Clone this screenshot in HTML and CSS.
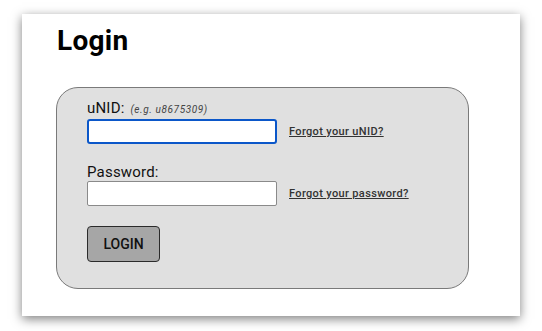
FILE: index.html
```html
<!DOCTYPE html>
<html>
<head>
<meta charset="utf-8">
<link rel="stylesheet" href="styles.css">
</head>
<body>
<div class="page">
  <h1 class="title">Login</h1>
  <form class="panel">
    <div class="field">
      <label class="label" for="unid">uNID: <span class="hint">(e.g. u8675309)</span></label>
      <div class="row">
        <input id="unid" class="input focused" type="text">
        <a class="link" href="#">Forgot your uNID?</a>
      </div>
    </div>
    <div class="field">
      <label class="label" for="pw">Password:</label>
      <div class="row">
        <input id="pw" class="input" type="password">
        <a class="link" href="#">Forgot your password?</a>
      </div>
    </div>
    <button class="btn" type="button">LOGIN</button>
  </form>
</div>
</body>
</html>
```

FILE: styles.css
```css
html, body {
  margin: 0;
  padding: 0;
  background: #ffffff;
}
body {
  font-family: Roboto, "Liberation Sans", Arial, sans-serif;
  color: #111;
  padding: 14px 0 15px 22px;
  min-height: 331px;
  box-sizing: border-box;
}
.page {
  width: 498px;
  height: 302px;
  box-sizing: border-box;
  background: #fff;
  box-shadow: 0 3px 10px rgba(0,0,0,0.5);
  padding: 10px 0 0 34px;
}
.title {
  margin: 0;
  font-size: 28px;
  font-weight: 700;
  line-height: 34px;
  color: #000;
  padding-left: 1px;
  letter-spacing: 0.3px;
}
.panel {
  margin-top: 29px;
  width: 413px;
  height: 202px;
  box-sizing: border-box;
  background: #e0e0e0;
  border: 1px solid #7a7a7a;
  border-radius: 22px;
  padding: 11px 0 0 30px;
  display: flex;
  flex-direction: column;
  align-items: flex-start;
  gap: 19px;
}
.field {
  display: flex;
  flex-direction: column;
}
.label {
  font-size: 15px;
  line-height: 18px;
  color: #111;
  letter-spacing: 0.2px;
}
.hint {
  font-size: 10px;
  font-style: italic;
  color: #444;
  letter-spacing: 0.6px;
  margin-left: 2px;
}
.row {
  display: flex;
  align-items: center;
  gap: 12px;
}
.input {
  width: 190px;
  height: 25px;
  box-sizing: border-box;
  margin: 0;
  background: #fff;
  border: 1px solid #8a8a8a;
  border-radius: 2px;
  outline: none;
}
.input.focused {
  border: 2px solid #0b57c9;
  border-radius: 3px;
}
.link {
  font-size: 11px;
  font-weight: 500;
  color: #333;
  text-decoration: underline;
  letter-spacing: 0.35px;
}
.btn {
  margin-top: 1px;
  width: 73px;
  height: 36px;
  box-sizing: border-box;
  background: #a6a6a6;
  border: 1px solid #2b2b2b;
  border-radius: 4px;
  font-family: Roboto, "Liberation Sans", Arial, sans-serif;
  font-size: 14px;
  font-weight: 500;
  color: #111;
  padding: 0;
}
```
